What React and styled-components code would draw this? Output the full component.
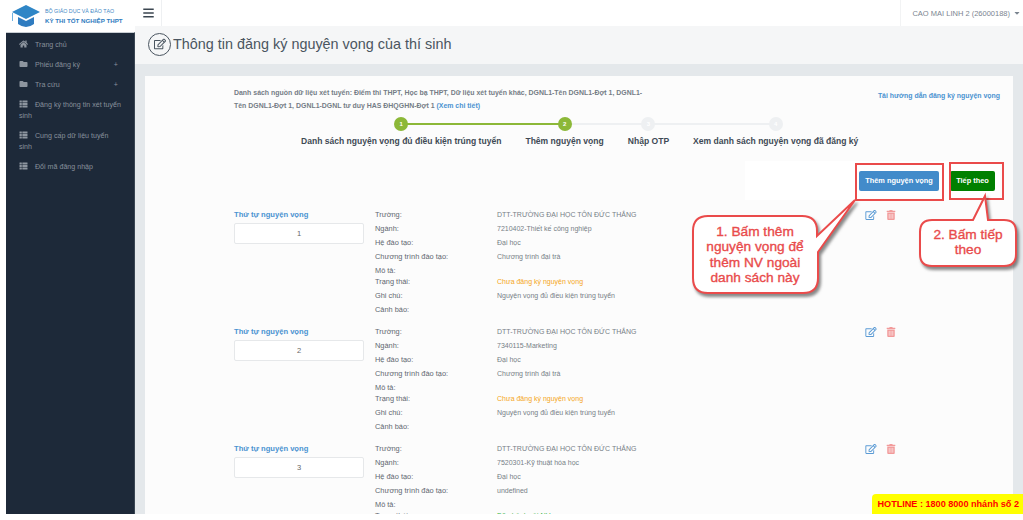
import React from "react";
import styled, { createGlobalStyle } from "styled-components";
import { FaHome, FaFolder, FaThList, FaBars, FaRegEdit, FaTrashAlt, FaCaretDown } from "react-icons/fa";

const GlobalStyle = createGlobalStyle`
  html, body {
    margin: 0;
    padding: 0;
    background: #fff;
    overflow: hidden;
  }
  * { box-sizing: border-box; }
`;

const Page = styled.div`
  position: relative;
  display: flex;
  width: 1023px;
  height: 514px;
  overflow: hidden;
  font-family: "Liberation Sans", Arial, sans-serif;
  color: #555;
`;

const Side = styled.aside`
  width: 135px;
  flex: none;
  display: flex;
  flex-direction: column;
  background: #fff;
`;

const Logo = styled.div`
  height: 32px;
  display: flex;
  align-items: center;
  gap: 4px;
  padding: 2px 0 2px 11px;
`;

const LogoText = styled.div`
  display: flex;
  flex-direction: column;
  color: #3f87c5;
  font-size: 5.3px;
  line-height: 9px;
  white-space: nowrap;

  b {
    font-size: 6.2px;
    color: #2f7cc0;
  }
`;

const Nav = styled.nav`
  flex: 1;
  margin-left: 6px;
  padding-top: 2px;
  background: #1d2939;
  border-top: 1px solid #c9ced3;
  border-right: 1px solid #3a4653;
`;

const NavItem = styled.div`
  position: relative;
  padding: 5px 12px 4px 13px;
  color: #87909b;
  font-size: 7.1px;
  line-height: 11px;

  svg {
    width: 9px;
    height: 8px;
    margin-right: 7px;
    vertical-align: -1px;
    color: #8d959f;
  }

  span {
    position: absolute;
    right: 16px;
    top: 5px;
  }
`;

const Main = styled.main`
  flex: 1;
  min-width: 0;
  display: flex;
  flex-direction: column;
  background: #e4e8eb;
`;

const TopBar = styled.header`
  height: 26px;
  flex: none;
  display: flex;
  align-items: center;
  justify-content: space-between;
  background: #fff;
`;

const Toggle = styled.div`
  width: 27px;
  height: 26px;
  display: flex;
  align-items: center;
  justify-content: center;
  border-right: 1px solid #eef0f2;
  color: #3b4650;

  svg {
    width: 11px;
    height: 12px;
  }
`;

const UserMenu = styled.div`
  height: 26px;
  display: flex;
  align-items: center;
  gap: 4px;
  padding: 0 3px 0 11px;
  border-left: 1px solid #f2f3f4;
  color: #7b8590;
  font-size: 7.5px;

  svg {
    width: 6px;
    height: 8px;
  }
`;

const TitleBar = styled.div`
  height: 38px;
  flex: none;
  display: flex;
  align-items: center;
  gap: 2px;
  padding: 0 0 2px 13px;
  background: #f5f6f7;
  color: #4a5560;
  font-size: 14.4px;
  white-space: nowrap;
`;

const TitleIcon = styled.div`
  width: 23px;
  height: 23px;
  display: flex;
  align-items: center;
  justify-content: center;
  border: 1.3px solid #4a5560;
  border-radius: 50%;

  svg {
    width: 12px;
    height: 12px;
  }
`;

const Card = styled.section`
  flex: 1;
  margin: 12px 10px 0;
  padding: 10px 13px 0 89px;
  overflow: hidden;
  background: #fcfcfc;
`;

const Intro = styled.div`
  display: flex;
  justify-content: space-between;
  align-items: flex-start;
`;

const Sources = styled.p`
  width: 420px;
  margin: 0;
  color: #757d86;
  font-size: 6.95px;
  font-weight: bold;
  line-height: 13px;

  a {
    color: #4b93d1;
  }
`;

const GuideLink = styled.a`
  margin-top: 3px;
  color: #4b93d1;
  font-size: 6.95px;
  font-weight: bold;
  line-height: 13px;
`;

const Steps = styled.div`
  display: flex;
  gap: 24px;
  margin: 5px 0 0 67px;
`;

const Step = styled.div`
  position: relative;
  display: flex;
  flex-direction: column;
  align-items: center;
  gap: 4px;
  color: #3f4a55;
  font-size: 8.55px;
  font-weight: bold;
  line-height: 13px;
  white-space: nowrap;

  &::before {
    content: "";
    display: ${(p) => (p.$line ? "block" : "none")};
    position: absolute;
    top: 6px;
    left: 50%;
    width: ${(p) => p.$line}px;
    height: 2px;
    background: ${(p) => (p.$done ? "#8cb838" : "#eef0f2")};
  }
`;

const Dot = styled.div`
  position: relative;
  width: 14px;
  height: 14px;
  display: flex;
  align-items: center;
  justify-content: center;
  border-radius: 50%;
  background: ${(p) => (p.$done ? "#8cb838" : "#eef0f2")};
  color: #fff;
  font-size: 6px;
`;

const Actions = styled.div`
  display: flex;
  justify-content: flex-end;
  align-items: center;
  width: 255px;
  height: 39px;
  margin: 13px 0 8px 511px;
  padding: 0 5px 0 0;
  gap: 11px;
  background: #fff;
`;

const Button = styled.button`
  height: 20px;
  padding: 0;
  width: ${(p) => p.$w}px;
  border: 0;
  border-radius: 2px;
  background: ${(p) => p.$bg};
  color: #fff;
  font-family: inherit;
  font-size: 7.4px;
  font-weight: bold;
`;

const Row = styled.div`
  display: grid;
  grid-template-columns: 130px 321px 1fr;
  height: 117px;
`;

const OrderCol = styled.div`
  display: flex;
  flex-direction: column;
  gap: 3px;
  padding-top: 1px;
`;

const OrderLabel = styled.div`
  color: #4b93d1;
  font-size: 7.6px;
  font-weight: bold;
  line-height: 11px;
`;

const OrderBox = styled.div`
  height: 21px;
  display: flex;
  align-items: center;
  justify-content: center;
  border: 1px solid #e6e8ea;
  border-radius: 2px;
  background: #fff;
  color: #666;
  font-size: 7.5px;
`;

const Fields = styled.div`
  display: grid;
  grid-template-columns: 122px 188px;
  grid-template-rows: repeat(4, 14px) 11px repeat(3, 14px);
  margin-left: 11px;
  font-size: 7px;
  line-height: 14px;
  color: #777f87;
`;

const FieldName = styled.div`
  font-size: 7.4px;
  color: #5f6770;
`;

const FieldValue = styled.div`
  color: ${(p) => p.$color || "#777f87"};
`;

const RowIcons = styled.div`
  display: flex;
  gap: 8px;
  padding: 2px 0 0 180px;

  svg {
    width: 12px;
    height: 10px;
  }
`;

const Hotline = styled.div`
  position: absolute;
  right: 0;
  bottom: 0;
  height: 20px;
  padding: 0 4px 0 5px;
  display: flex;
  align-items: center;
  border-radius: 4px 0 0 0;
  background: #ffff00;
  color: #f00;
  font-size: 9.1px;
  font-weight: bold;
  white-space: nowrap;
`;

const Marker = styled.div`
  position: absolute;
  left: ${(p) => p.$x}px;
  top: ${(p) => p.$y}px;
  width: ${(p) => p.$w}px;
  height: ${(p) => p.$h}px;
  border: 2px solid #ea4b4b;
`;

const CalloutShape = styled.svg`
  position: absolute;
  left: 0;
  top: 0;
  pointer-events: none;
  filter: drop-shadow(2px 3px 1.5px rgba(40, 40, 40, 0.55));
`;

const CalloutText = styled.div`
  position: absolute;
  left: ${(p) => p.$x}px;
  top: ${(p) => p.$y}px;
  width: ${(p) => p.$w}px;
  color: #e94b4b;
  font-size: 13.7px;
  line-height: 15.4px;
  text-align: center;
  -webkit-text-stroke: 0.35px #e94b4b;
`;

const menu = [
  { icon: <FaHome />, label: "Trang chủ" },
  { icon: <FaFolder />, label: "Phiếu đăng ký", plus: true },
  { icon: <FaFolder />, label: "Tra cứu", plus: true },
  { icon: <FaThList />, label: "Đăng ký thông tin xét tuyển sinh" },
  { icon: <FaThList />, label: "Cung cấp dữ liệu tuyển sinh" },
  { icon: <FaThList />, label: "Đổi mã đăng nhập" },
];

const steps = [
  { n: 1, label: "Danh sách nguyện vọng đủ điều kiện trúng tuyển", line: 164, done: true, dot: true },
  { n: 2, label: "Thêm nguyện vọng", line: 83, dot: true },
  { n: 3, label: "Nhập OTP", line: 127 },
  { n: 4, label: "Xem danh sách nguyện vọng đã đăng ký" },
];

const rows = [
  { n: 1, major: "7210402-Thiết kế công nghiệp", program: "Chương trình đại trà", status: "Chưa đăng ký nguyện vọng", color: "#f5a623" },
  { n: 2, major: "7340115-Marketing", program: "Chương trình đại trà", status: "Chưa đăng ký nguyện vọng", color: "#f5a623" },
  { n: 3, major: "7520301-Kỹ thuật hóa học", program: "undefined", status: "Đã phê duyệt NV", color: "#3fb54a" },
];

const CapLogo = () => (
  <svg width="30" height="24" viewBox="0 0 30 24">
    <path d="M1 8 L15 1 L29 8 L15 15 Z" fill="#2f86c6" />
    <path d="M7 13 L15 17 L23 13 V20 Q15 26 7 20 Z" fill="#2f7cc0" />
    <path d="M1.5 9 V17" stroke="#6fb1e0" strokeWidth="1" />
  </svg>
);

const App = () => {
  return (
    <Page>
      <GlobalStyle />
      <Side>
        <Logo>
          <CapLogo />
          <LogoText>
            <span>BỘ GIÁO DỤC VÀ ĐÀO TẠO</span>
            <b>KỲ THI TỐT NGHIỆP THPT</b>
          </LogoText>
        </Logo>
        <Nav>
          {menu.map((m) => (
            <NavItem key={m.label}>
              {m.icon}
              {m.label}
              {m.plus && <span>+</span>}
            </NavItem>
          ))}
        </Nav>
      </Side>
      <Main>
        <TopBar>
          <Toggle>
            <FaBars />
          </Toggle>
          <UserMenu>
            CAO MAI LINH 2 (26000188)
            <FaCaretDown />
          </UserMenu>
        </TopBar>
        <TitleBar>
          <TitleIcon>
            <FaRegEdit />
          </TitleIcon>
          Thông tin đăng ký nguyện vọng của thí sinh
        </TitleBar>
        <Card>
          <Intro>
            <Sources>
              Danh sách nguồn dữ liệu xét tuyển: Điểm thi THPT, Học bạ THPT, Dữ liệu xét tuyển khác, DGNL1-Tên DGNL1-Đợt 1, DGNL1-
              <br />
              Tên DGNL1-Đợt 1, DGNL1-DGNL tư duy HAS ĐHQGHN-Đợt 1 <a>(Xem chi tiết)</a>
            </Sources>
            <GuideLink>Tải hướng dẫn đăng ký nguyện vọng</GuideLink>
          </Intro>
          <Steps>
            {steps.map((s) => (
              <Step key={s.n} $line={s.line} $done={s.done}>
                <Dot $done={s.dot}>{s.n}</Dot>
                {s.label}
              </Step>
            ))}
          </Steps>
          <Actions>
            <Button $w={80} $bg="#428bca">Thêm nguyện vọng</Button>
            <Button $w={45} $bg="#008000">Tiếp theo</Button>
          </Actions>
          {rows.map((r) => (
            <Row key={r.n}>
              <OrderCol>
                <OrderLabel>Thứ tự nguyện vọng</OrderLabel>
                <OrderBox>{r.n}</OrderBox>
              </OrderCol>
              <Fields>
                <FieldName>Trường:</FieldName>
                <FieldValue>DTT-TRƯỜNG ĐẠI HỌC TÔN ĐỨC THẮNG</FieldValue>
                <FieldName>Ngành:</FieldName>
                <FieldValue>{r.major}</FieldValue>
                <FieldName>Hệ đào tạo:</FieldName>
                <FieldValue>Đại học</FieldValue>
                <FieldName>Chương trình đào tạo:</FieldName>
                <FieldValue>{r.program}</FieldValue>
                <FieldName>Mô tả:</FieldName>
                <FieldValue />
                <FieldName>Trạng thái:</FieldName>
                <FieldValue $color={r.color}>{r.status}</FieldValue>
                <FieldName>Ghi chú:</FieldName>
                <FieldValue>Nguyện vọng đủ điều kiện trúng tuyển</FieldValue>
                <FieldName>Cảnh báo:</FieldName>
                <FieldValue />
              </Fields>
              <RowIcons>
                <FaRegEdit color="#5b9bd5" />
                <FaTrashAlt color="#f29a9a" />
              </RowIcons>
            </Row>
          ))}
        </Card>
      </Main>

      <Marker $x={855} $y={163} $w={89} $h={38} />
      <Marker $x={949} $y={162} $w={55} $h={38} />
      <CalloutShape width="1023" height="514" viewBox="0 0 1023 514">
        <path
          d="M708 216 H802 Q817 216 817 231 V236 L855 200 L818 252 V278 Q818 293 803 293 H708 Q693 293 693 278 V231 Q693 216 708 216 Z"
          fill="#fff"
          stroke="#ea4b4b"
          strokeWidth="2"
        />
        <path
          d="M932 220 H973 L985 196 L988 220 H1004 Q1016 220 1016 232 V254 Q1016 266 1004 266 H932 Q920 266 920 254 V232 Q920 220 932 220 Z"
          fill="#fff"
          stroke="#ea4b4b"
          strokeWidth="2"
        />
      </CalloutShape>
      <CalloutText $x={695} $y={224} $w={120}>
        1. Bấm thêm nguyện vọng để thêm NV ngoài danh sách này
      </CalloutText>
      <CalloutText $x={922} $y={227} $w={92}>
        2. Bấm tiếp theo
      </CalloutText>
      <Hotline>HOTLINE : 1800 8000 nhánh số 2</Hotline>
    </Page>
  );
};

export default App;
